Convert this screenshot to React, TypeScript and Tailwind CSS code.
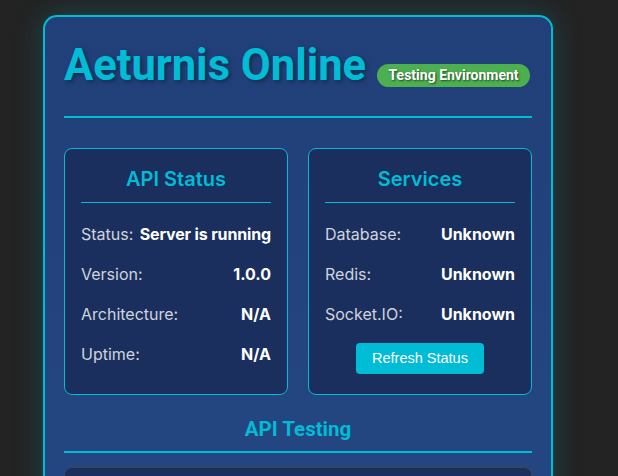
const apiRows = [
  { label: "Version:", value: "1.0.0" },
  { label: "Architecture:", value: "N/A" },
  { label: "Uptime:", value: "N/A" },
];

const serviceRows = [
  { label: "Database:", value: "Unknown" },
  { label: "Redis:", value: "Unknown" },
  { label: "Socket.IO:", value: "Unknown" },
];

function Panel({ title, children }: { title: string; children: React.ReactNode }) {
  return (
    <div className="flex-1 rounded-lg border border-[#00bcd4] bg-[#1a2f5e] px-4 pt-[17px] pb-5">
      <h3 className="text-center text-[20px] font-semibold leading-[26px] text-[#00bcd4]">{title}</h3>
      <div className="mt-[10px] h-px bg-[#00bcd4]" />
      {children}
    </div>
  );
}

function Row({ label, value }: { label: string; value: string }) {
  return (
    <div className="flex h-10 items-center justify-between whitespace-nowrap text-[16px]">
      <span className="text-[#d0d4dc]">{label}</span>
      <span className="font-bold text-white">{value}</span>
    </div>
  );
}

export default function App() {
  return (
    <div className="min-h-screen bg-[#232323] pt-[15px] font-['Inter',sans-serif]">
      <div className="ml-[43px] w-[510px] rounded-[14px] border-2 border-[#00bcd4] bg-gradient-to-b from-[#213f79] to-[#244884] px-[19px] pt-[21px] pb-10 shadow-[0_0_28px_rgba(0,188,212,0.25)]">
        <div className="flex items-end gap-[11px] whitespace-nowrap font-['Roboto',sans-serif]">
          <h1 className="shrink-0 text-[43.5px] font-bold leading-[56px] text-[#00bcd4] [text-shadow:2px_2px_4px_rgba(0,0,0,0.35)]">
            Aeturnis Online
          </h1>
          <span className="mb-[7px] shrink-0 rounded-full bg-[#4caf50] px-[11.5px] pt-[3px] pb-[3px] text-[14px] font-bold leading-[17px] text-white [text-shadow:1px_1px_2px_rgba(0,0,0,0.6)]">
            Testing Environment
          </span>
        </div>
        <div className="mt-[22px] h-[2px] bg-[#00bcd4]" />

        <div className="mt-[30px] flex gap-5">
          <Panel title="API Status">
            <div className="mt-[11px]">
              <div className="flex h-10 items-center justify-between whitespace-nowrap text-[16px]">
                <span className="text-[#d0d4dc]">Status:</span>
                <span className="font-bold tracking-[-0.15px] text-white">Server is running</span>
              </div>
              {apiRows.map((r) => (
                <Row key={r.label} label={r.label} value={r.value} />
              ))}
            </div>
          </Panel>
          <Panel title="Services">
            <div className="mt-[11px]">
              {serviceRows.map((r) => (
                <Row key={r.label} label={r.label} value={r.value} />
              ))}
            </div>
            <div className="mt-[9px] flex justify-center">
              <button className="h-[31px] rounded bg-[#00bcd4] px-4 font-['Liberation_Sans',sans-serif] text-[14.5px] text-white">
                Refresh Status
              </button>
            </div>
          </Panel>
        </div>

        <h2 className="mt-[20px] text-center font-['Roboto',sans-serif] text-[20.5px] font-bold leading-[28px] text-[#00bcd4]">
          API Testing
        </h2>
        <div className="mt-[8px] h-[2px] bg-[#00bcd4]" />
        <div className="mt-[14px] h-24 rounded-lg border border-[#444] bg-[#1a2f5e]" />
      </div>
    </div>
  );
}
